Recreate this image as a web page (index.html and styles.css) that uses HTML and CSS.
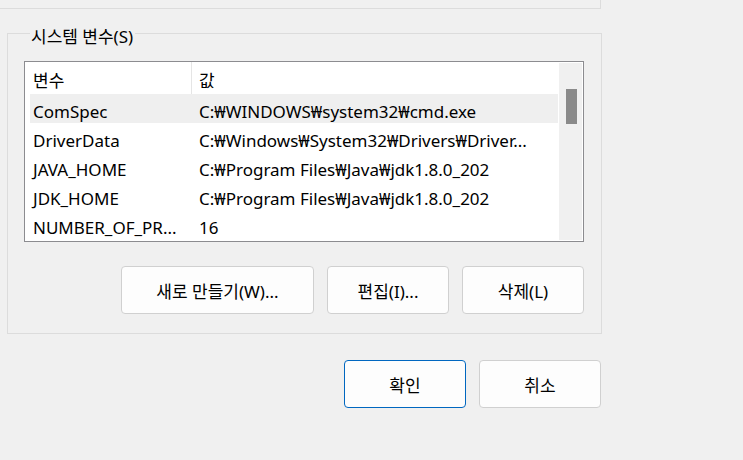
FILE: index.html
```html
<!DOCTYPE html>
<html lang="ko">
<head>
    <meta charset="UTF-8">
    <title>환경 변수</title>
    <link rel="stylesheet" href="styles.css">
</head>
<body>

    <!-- bottom of the user variables group -->
    <div class="group-stub"></div>

    <!-- System variables -->
    <fieldset class="group">
        <legend class="group__title">시스템 변수(S)</legend>

        <div class="list">
            <div class="list__body">
                <div class="list__head">
                    <span class="col col--name">변수</span>
                    <span class="col col--value">값</span>
                </div>
                <div class="list__row list__row--selected">
                    <span class="col col--name">ComSpec</span>
                    <span class="col col--value">C:₩WINDOWS₩system32₩cmd.exe</span>
                </div>
                <div class="list__row">
                    <span class="col col--name">DriverData</span>
                    <span class="col col--value">C:₩Windows₩System32₩Drivers₩Driver...</span>
                </div>
                <div class="list__row">
                    <span class="col col--name">JAVA_HOME</span>
                    <span class="col col--value">C:₩Program Files₩Java₩jdk1.8.0_202</span>
                </div>
                <div class="list__row">
                    <span class="col col--name">JDK_HOME</span>
                    <span class="col col--value">C:₩Program Files₩Java₩jdk1.8.0_202</span>
                </div>
                <div class="list__row">
                    <span class="col col--name">NUMBER_OF_PR...</span>
                    <span class="col col--value">16</span>
                </div>
            </div>
            <div class="scrollbar">
                <div class="scrollbar__thumb"></div>
            </div>
        </div>

        <div class="group__buttons">
            <button class="btn btn--wide">새로 만들기(W)...</button>
            <button class="btn">편집(I)...</button>
            <button class="btn">삭제(L)</button>
        </div>
    </fieldset>

    <!-- Dialog buttons -->
    <div class="dialog-buttons">
        <button class="btn btn--default">확인</button>
        <button class="btn">취소</button>
    </div>

</body>
</html>
```

FILE: styles.css
```css
body {
    margin: 0;
    background-color: #f0f0f0;
    color: #000;
    font-family: 'Segoe UI', 'Noto Sans', 'Noto Sans CJK KR', sans-serif;
    font-size: 17px;
}

/* Group boxes */
.group-stub {
    width: 601px;
    height: 9px;
    border-bottom: 1px solid #dcdcdc;
    border-right: 1px solid #dcdcdc;
    box-sizing: border-box;
}

.group {
    margin: 11px 0 0 7px;
    padding: 0 17px 19px 16px;
    width: 595px;
    box-sizing: border-box;
    border: 1px solid #dcdcdc;
    min-width: 0;
}

.group__title {
    padding: 7px 2px 0 1px;
    margin-left: 6px;
    font-size: 17px;
    line-height: 20px;
}

/* List view */
.list {
    display: flex;
    margin-top: 14px;
    height: 181px;
    border: 1px solid #8c8c90;
    background-color: #fff;
    box-sizing: border-box;
    overflow: hidden;
}

.list__body {
    flex: 1;
}

.list__head {
    display: flex;
    height: 32px;
    align-items: center;
    padding-top: 3px;
    box-sizing: border-box;
}

.list__head .col--name {
    width: 158px;
    padding-left: 8px;
    align-self: stretch;
    display: flex;
    align-items: center;
    margin-top: -3px;
    padding-top: 3px;
    border-right: 1px solid #e5e5e5;
}

.list__head .col--value {
    padding-left: 7px;
}

.list__row {
    display: flex;
    align-items: center;
    height: 29px;
    margin-left: 5px;
    padding-top: 5px;
    box-sizing: border-box;
}

.list__row--selected {
    background-color: #efefef;
}

.list__row .col--name {
    width: 166px;
    padding-left: 3px;
    white-space: nowrap;
}

.list__row .col--value {
    white-space: nowrap;
}

.scrollbar {
    width: 25px;
    background-color: #f0f0f0;
    border: 1px solid #fff;
    box-sizing: border-box;
    padding-top: 26px;
}

.scrollbar__thumb {
    width: 11px;
    height: 35px;
    margin-left: 7px;
    background-color: #8a8a8a;
}

/* Buttons */
.group__buttons,
.dialog-buttons {
    display: flex;
    justify-content: flex-end;
    gap: 13px;
}

.group__buttons {
    margin-top: 24px;
}

.dialog-buttons {
    width: 601px;
    margin-top: 26px;
}

.btn {
    width: 122px;
    height: 48px;
    padding: 0;
    font-family: inherit;
    font-size: 17px;
    color: #000;
    background-color: #fdfdfd;
    border: 1px solid #d0d0d0;
    border-radius: 4px;
}

.btn--wide {
    width: 193px;
}

.btn--default {
    border-color: #0067c0;
}
```
